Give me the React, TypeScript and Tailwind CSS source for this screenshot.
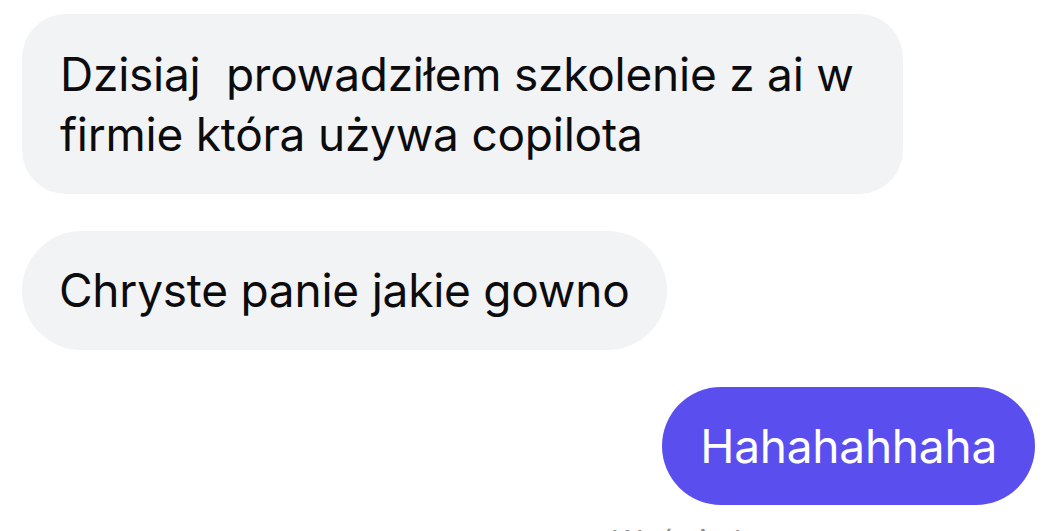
export default function App() {
  return (
    <div className="h-[531px] w-[1060px] overflow-hidden bg-white font-['Inter',sans-serif] text-[#0c0c0e]">
      <div className="flex flex-col gap-[37px] pl-[22px] pr-[25px] pt-[14px]">
        <div className="flex">
          <div className="w-[881px] rounded-[44px] bg-[#f2f3f5] px-[38px] py-[30px] text-[46px] leading-[60px] tracking-[-0.005em]">
            Dzisiaj&nbsp; prowadziłem szkolenie z ai w
            <br />
            firmie która używa copilota
          </div>
        </div>
        <div className="flex">
          <div className="rounded-full bg-[#f2f3f5] px-[37px] py-[30px] text-[46px] leading-[59px] tracking-[-0.005em]">
            Chryste panie jakie gowno
          </div>
        </div>
        <div className="flex flex-col items-end">
          <div className="rounded-full bg-[#5a4fee] px-[38px] py-[30px] text-[46px] leading-[58px] tracking-[-0.005em] text-white">
            Hahahahhaha
          </div>
          <div className="mr-[160px] mt-[14px] text-[30px] text-[#8e8e93]">Wyświetlono teraz</div>
        </div>
      </div>
    </div>
  )
}
